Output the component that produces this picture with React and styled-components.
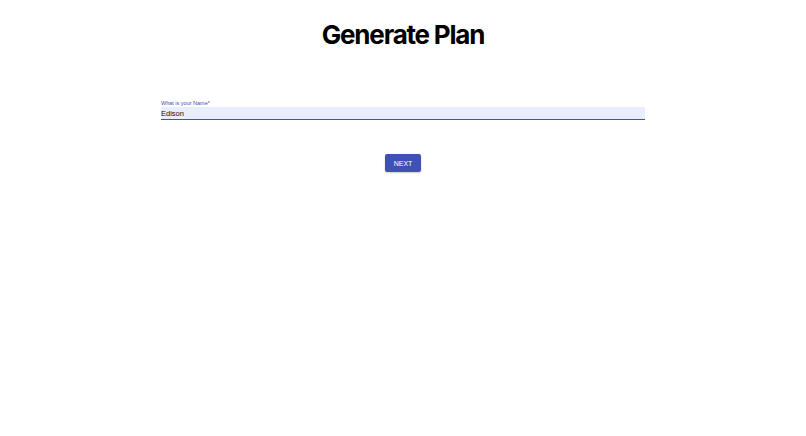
import React, { useState } from "react";
import styled, { createGlobalStyle } from "styled-components";

const GlobalStyle = createGlobalStyle`
  html, body {
    margin: 0;
    padding: 0;
    background: #fff;
    font-family: "Liberation Sans", Arial, sans-serif;
  }
`;

const Page = styled.div`
  width: 806px;
  min-height: 436px;
  display: flex;
  flex-direction: column;
  align-items: center;
`;

const Title = styled.h1`
  margin: 19px 0 0;
  font-family: Inter, "Liberation Sans", sans-serif;
  font-size: 26px;
  line-height: 32px;
  font-weight: 700;
  letter-spacing: -1.2px;
  color: #000;
`;

const Form = styled.form`
  width: 484px;
  margin-top: 49px;
  display: flex;
  flex-direction: column;
  align-items: center;
`;

const Field = styled.label`
  width: 100%;
  display: flex;
  flex-direction: column;
`;

const Label = styled.span`
  font-size: 5.5px;
  line-height: 7px;
  color: #3f51b5;
`;

const Input = styled.input`
  box-sizing: border-box;
  width: 100%;
  height: 13px;
  border: none;
  border-bottom: 1.5px solid #3f51b5;
  background: #e8eefd;
  padding: 1px 0 0;
  margin: 0;
  font-family: inherit;
  font-size: 7.5px;
  color: #111;
  outline: none;
`;

const Button = styled.button`
  margin-top: 34px;
  width: 36px;
  height: 18px;
  border: none;
  border-radius: 2px;
  background: #3f51b5;
  color: #fff;
  font-family: inherit;
  font-size: 7px;
  font-weight: 500;
  padding: 0;
  box-shadow: 0 1px 2px rgba(0, 0, 0, 0.2);
  cursor: pointer;
`;

export default function App() {
  const [name, setName] = useState("Edison");
  return (
    <Page>
      <GlobalStyle />
      <Title>Generate Plan</Title>
      <Form onSubmit={(e) => e.preventDefault()}>
        <Field>
          <Label>What is your Name*</Label>
          <Input value={name} onChange={(e) => setName(e.target.value)} />
        </Field>
        <Button type="submit">NEXT</Button>
      </Form>
    </Page>
  );
}
